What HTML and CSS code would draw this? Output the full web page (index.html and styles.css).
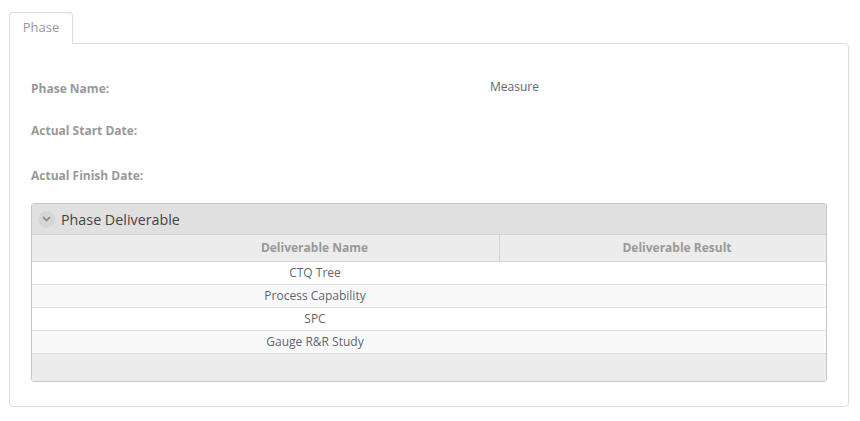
FILE: index.html
```html
<!DOCTYPE html>
<html>
<head>
<meta charset="utf-8">
<link rel="stylesheet" href="styles.css">
</head>
<body>
<div class="page">
  <div class="tabs">
    <div class="tab">Phase</div>
  </div>
  <div class="panel">
    <div class="field f1">
      <div class="label">Phase Name:</div>
      <div class="value">Measure</div>
    </div>
    <div class="field f2">
      <div class="label">Actual Start Date:</div>
      <div class="value"></div>
    </div>
    <div class="field f3">
      <div class="label">Actual Finish Date:</div>
      <div class="value"></div>
    </div>
    <div class="grid">
      <div class="caption">
        <span class="toggle"><svg width="9" height="6" viewBox="0 0 9 6"><path d="M1 1 L4.5 4.5 L8 1" fill="none" stroke="#888" stroke-width="1.6"/></svg></span>
        <span class="caption-text">Phase Deliverable</span>
      </div>
      <div class="head">
        <div class="hcell">Deliverable Name</div>
        <div class="hcell">Deliverable Result</div>
      </div>
      <div class="row"><div class="cell">CTQ Tree</div><div class="cell"></div></div>
      <div class="row alt"><div class="cell">Process Capability</div><div class="cell"></div></div>
      <div class="row"><div class="cell">SPC</div><div class="cell"></div></div>
      <div class="row alt"><div class="cell">Gauge R&amp;R Study</div><div class="cell"></div></div>
      <div class="footer"></div>
    </div>
  </div>
</div>
</body>
</html>
```
FILE: styles.css
```css
* { box-sizing: border-box; }
body {
  margin: 0;
  background: #fff;
  font-family: "Open Sans", "Liberation Sans", sans-serif;
}
.page {
  padding: 12px 11px 0 9px;
}
.tabs {
  display: flex;
  height: 32px;
}
.tab {
  width: 64px;
  height: 32px;
  border: 1px solid #ddd;
  border-bottom: none;
  border-radius: 4px 4px 0 0;
  background: #fff;
  color: #999;
  font-size: 13px;
  line-height: 28px;
  text-align: center;
  position: relative;
  z-index: 1;
}
.panel {
  border: 1px solid #ddd;
  border-radius: 0 4px 4px 4px;
  margin-top: -1px;
  padding: 34px 21px 25px 21px;
  height: 364px;
}
.field {
  display: flex;
  font-size: 12px;
  line-height: 16px;
  padding-top: 1px;
}
.f1 { height: 42px; }
.f2 { height: 45px; }
.f3 { height: 38px; }
.label {
  width: 459px;
  font-weight: 700;
  color: #999;
  padding-top: 2px;
}
.value {
  color: #606773;
}
.grid {
  border: 1px solid #c8c8c8;
  border-radius: 3px;
  overflow: hidden;
}
.caption {
  height: 30px;
  background: #e0e0e0;
  display: flex;
  align-items: center;
  padding-left: 6px;
}
.toggle {
  width: 17px;
  height: 17px;
  border-radius: 50%;
  background: #d6d6d6;
  display: flex;
  align-items: center;
  justify-content: center;
  margin-right: 6px;
}
.caption-text {
  font-size: 14.3px;
  color: #444;
}
.head {
  display: flex;
  height: 28px;
  background: #ececec;
  border-top: 1px solid #d4d4d4;
  border-bottom: 1px solid #d4d4d4;
}
.hcell {
  flex: 1;
  text-align: center;
  font-size: 12px;
  font-weight: 700;
  color: #999;
  line-height: 26px;
  padding-left: 28px;
}
.hcell:first-child {
  flex: 0 0 468px;
  border-right: 1px solid #d4d4d4;
  padding-left: 98px;
}
.row {
  display: flex;
  height: 23px;
  background: #fff;
  border-bottom: 1px solid #ddd;
}
.row.alt { background: #f9f9f9; }
.cell {
  flex: 1;
  font-size: 12px;
  color: #5f6670;
  text-align: center;
  line-height: 22px;
}
.cell:first-child { flex: 0 0 468px; padding-left: 98px; }
.footer {
  height: 27px;
  background: #ececec;
}
```
